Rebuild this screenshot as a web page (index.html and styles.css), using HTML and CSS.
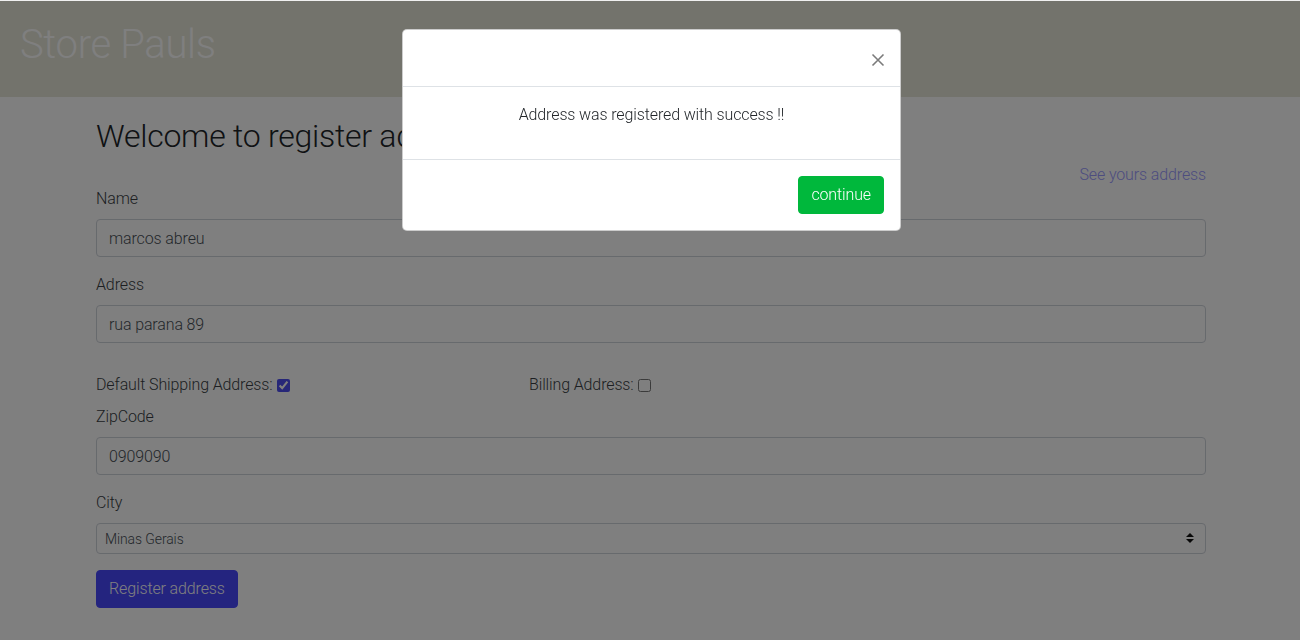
FILE: index.html
```html
<!DOCTYPE html>
<html lang="en">
<head>
<meta charset="utf-8">
<title>Store Pauls</title>
<link rel="stylesheet" href="styles.css">
</head>
<body>
<header class="topbar">
  <h1 class="brand">Store Pauls</h1>
</header>
<main class="container">
  <h2 class="title">Welcome to register address</h2>
  <div class="link-row"><a class="see-link" href="#">See yours address</a></div>
  <form class="form">
    <div class="group">
      <label class="label">Name</label>
      <input class="field" type="text" value="marcos abreu">
    </div>
    <div class="group">
      <label class="label">Adress</label>
      <input class="field" type="text" value="rua parana 89">
    </div>
    <div class="check-row">
      <label class="check check-first">Default Shipping Address: <input type="checkbox" class="box" checked></label>
      <label class="check">Billing Address: <input type="checkbox" class="box"></label>
    </div>
    <div class="group">
      <label class="label">ZipCode</label>
      <input class="field" type="text" value="0909090">
    </div>
    <div class="group">
      <label class="label">City</label>
      <div class="select-wrap">
        <select class="select"><option>Minas Gerais</option></select>
        <svg class="select-arrow" width="10" height="12" viewBox="0 0 10 12"><path d="M1 5 L5 1 L9 5 Z M1 7 L5 11 L9 7 Z" fill="#111"/></svg>
      </div>
    </div>
    <button class="btn-primary" type="button">Register address</button>
  </form>
</main>

<div class="backdrop"></div>
<div class="modal">
  <div class="modal-content">
    <div class="modal-header">
      <button class="close" type="button" aria-label="Close">
        <svg width="14" height="14" viewBox="0 0 14 14"><path d="M1.5 1.5 L12.5 12.5 M12.5 1.5 L1.5 12.5" stroke="#7b7b7b" stroke-width="1.6" fill="none"/></svg>
      </button>
    </div>
    <div class="modal-body">
      <p class="message">Address was registered with success !!</p>
    </div>
    <div class="modal-footer">
      <button class="btn-success" type="button">continue</button>
    </div>
  </div>
</div>
</body>
</html>
```

FILE: styles.css
```css
* { box-sizing: border-box; }
html, body { margin: 0; padding: 0; }
body {
  font-family: "Roboto Light", Roboto, "Liberation Sans", sans-serif;
  font-weight: 300;
  font-size: 16px;
  line-height: 24px;
  letter-spacing: -0.008em;
  color: #212529;
  background: #ffffff;
  height: 640px;
  overflow: hidden;
}
.topbar {
  background: #e6e6d8;
  padding: 20px 20px 29px;
  border-top: 1px solid #f0f0f0;
}
.brand {
  margin: 0;
  font-size: 40px;
  line-height: 47px;
  font-weight: 300;
  letter-spacing: -0.008em;
  color: #ffffff;
}
.container {
  width: 1140px;
  margin: 0 auto;
  padding: 20px 15px 0;
  position: relative;
  left: 1px;
}
.title {
  margin: 0 0 8px;
  font-size: 32px;
  line-height: 38px;
  font-weight: 300;
  letter-spacing: -0.008em;
  color: #212529;
}
.link-row {
  display: flex;
  justify-content: flex-end;
}
.see-link {
  color: #9a9aff;
  text-decoration: none;
}
.form { display: flex; flex-direction: column; align-items: flex-start; }
.group { width: 100%; margin-bottom: 16px; }
.label { display: block; margin-bottom: 8px; color: #3a3f45; }
.field {
  display: block;
  width: 100%;
  height: 38px;
  padding: 6px 12px;
  font-family: inherit;
  font-weight: 300;
  font-size: 16px;
  letter-spacing: -0.008em;
  color: #495057;
  background: #fff;
  border: 1px solid #ced4da;
  border-radius: 4px;
}
.check-row {
  display: flex;
  padding-top: 14px;
  margin-bottom: 8px;
  color: #3a3f45;
}
.check { display: flex; align-items: center; }
.check-first { width: 433px; }
.box {
  margin: 0 0 0 4px;
  width: 13px;
  height: 13px;
  accent-color: #4f4ff0;
}
.select-wrap { position: relative; width: 100%; }
.select {
  display: block;
  width: 100%;
  height: 31px;
  padding: 4px 8px;
  font-family: inherit;
  font-weight: 300;
  font-size: 14px;
  letter-spacing: -0.008em;
  color: #495057;
  background: #fff;
  border: 1px solid #ced4da;
  border-radius: 4px;
  appearance: none;
  -webkit-appearance: none;
}
.select-arrow {
  position: absolute;
  right: 11px;
  top: 9px;
  pointer-events: none;
}
.btn-primary {
  font-family: inherit;
  font-weight: 300;
  font-size: 16px;
  line-height: 24px;
  letter-spacing: -0.008em;
  padding: 6px 12px;
  border: 1px solid #4848ff;
  background: #4848ff;
  color: #fff;
  border-radius: 4px;
  height: 38px;
}
.backdrop {
  position: fixed;
  inset: 1px 0 0 0;
  background: rgba(0, 0, 0, 0.5);
}
.modal {
  position: fixed;
  inset: 0;
  display: flex;
  justify-content: center;
  align-items: flex-start;
  padding: 29px 0 0 3px;
}
.modal-content {
  width: 499px;
  background: #fff;
  border: 1px solid rgba(0, 0, 0, 0.2);
  border-radius: 5px;
  display: flex;
  flex-direction: column;
}
.modal-header {
  display: flex;
  justify-content: flex-end;
  height: 57px;
  padding: 16px;
  border-bottom: 1px solid #dee2e6;
}
.close {
  border: 0;
  background: transparent;
  padding: 0;
  margin: 7px -1px 0 0;
  width: 14px;
  height: 14px;
  display: flex;
}
.modal-body {
  padding: 16px 16px 0;
  border-bottom: 1px solid #dee2e6;
  height: 73px;
}
.message {
  margin: 0;
  text-align: center;
  font-weight: 300;
  color: #212529;
}
.modal-footer {
  display: flex;
  justify-content: flex-end;
  padding: 12px;
}
.btn-success {
  margin: 4px;
  height: 38px;
  padding: 6px 12px;
  font-family: inherit;
  font-weight: 300;
  font-size: 16px;
  line-height: 24px;
  letter-spacing: -0.008em;
  color: #fff;
  background: #00b83c;
  border: 1px solid #00b83c;
  border-radius: 4px;
}
```
